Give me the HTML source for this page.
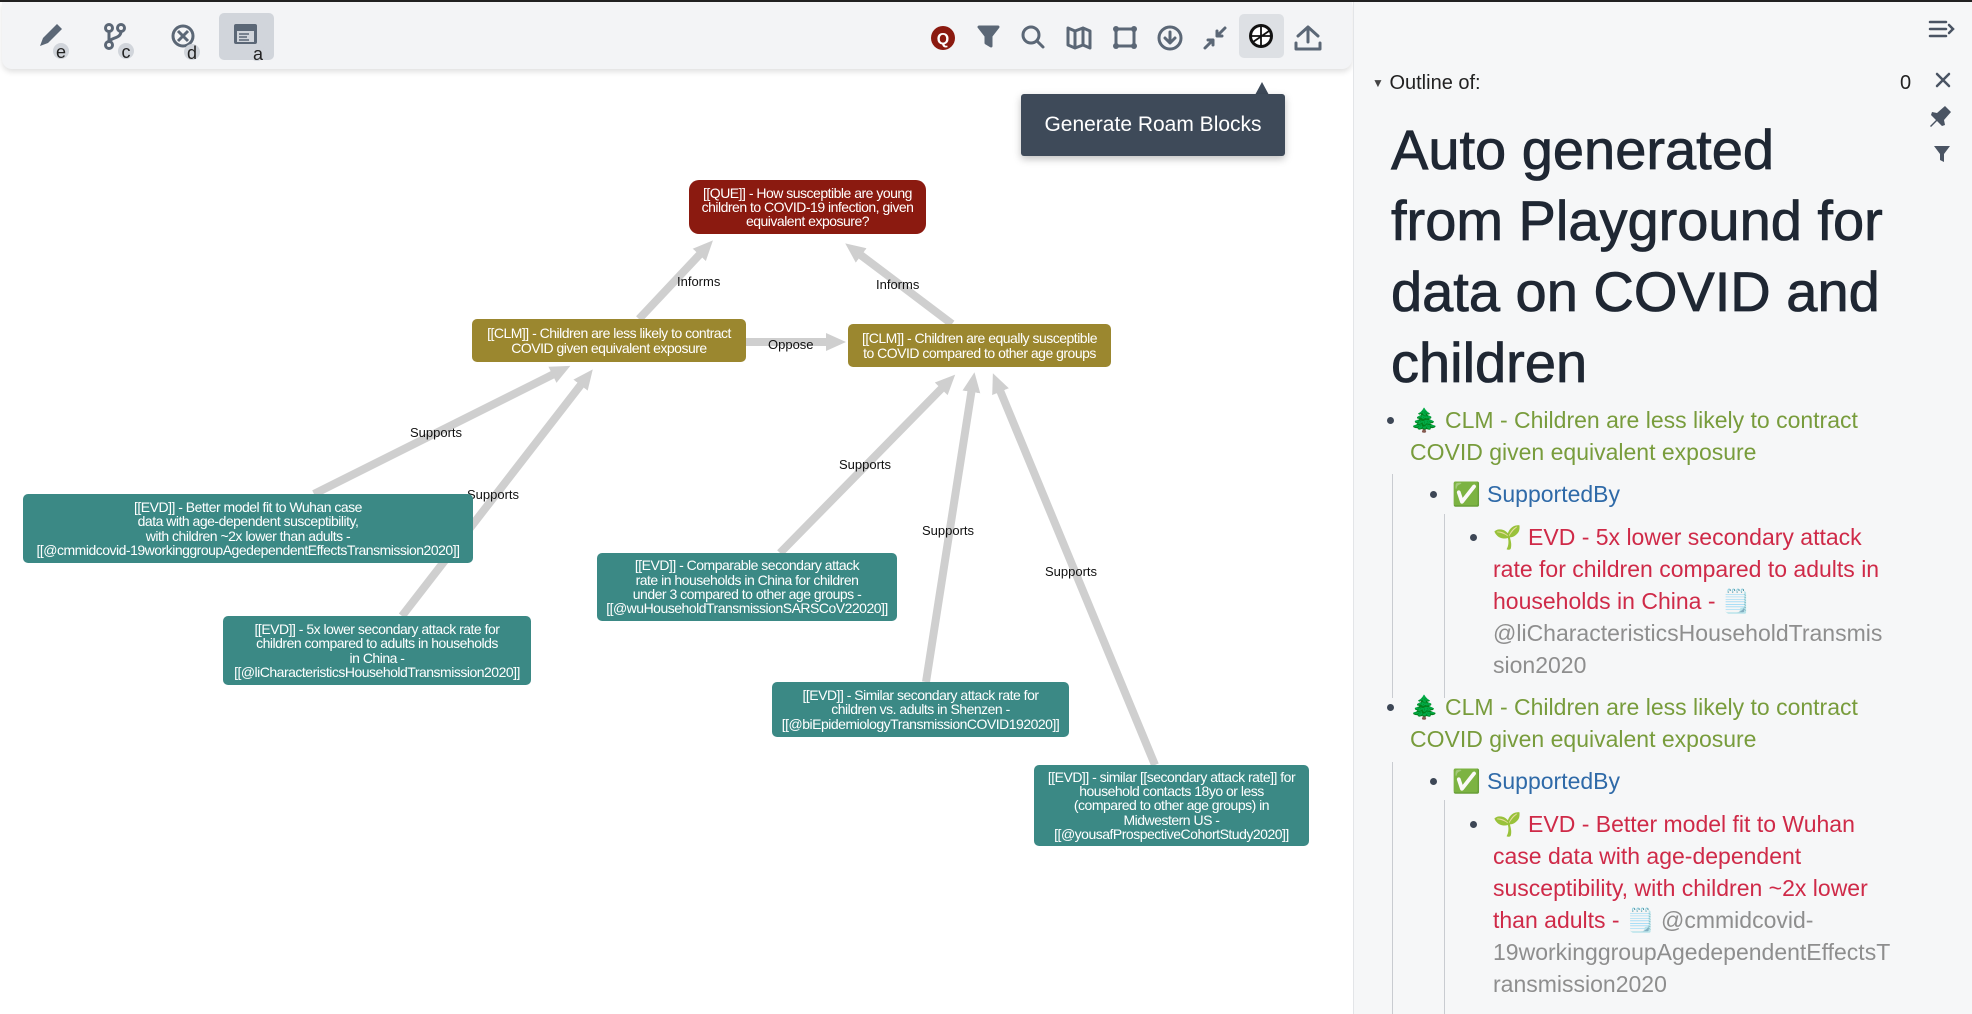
<!DOCTYPE html>
<html><head><meta charset="utf-8"><style>
*{box-sizing:border-box;margin:0;padding:0}
body{width:1972px;height:1014px;overflow:hidden;background:#fff;font-family:"Liberation Sans",sans-serif;position:relative}
.topline{position:absolute;left:0;top:0;width:1972px;height:2px;background:#222}
.toolbar{position:absolute;left:2px;top:2px;width:1350px;height:67px;background:#f3f4f6;border-radius:0 0 10px 10px;box-shadow:0 3px 6px rgba(0,0,0,.12)}
.panel{position:absolute;left:1353px;top:2px;width:619px;height:1012px;background:#f6f7f8;border-left:1px solid #e3e5e8}
.gl{position:absolute;font-size:13px;color:#111;font-family:"Liberation Sans",sans-serif}
.node{position:absolute;color:#fff;font-size:14px;line-height:14.3px;text-align:center;display:flex;align-items:center;justify-content:center;border-radius:5px;font-family:"Liberation Sans",sans-serif;letter-spacing:-0.5px;white-space:nowrap}
.evd{background:#3b8985}
.clm{background:#9b872f}
.o{position:absolute;font-size:23px;line-height:32px;overflow-wrap:anywhere}
.g{color:#789c3c}.r{color:#cf2a48}.b{color:#2f6aa8}.gr{color:#8e8e8e}
.dot{position:absolute;width:7px;height:7px;border-radius:50%;background:#3d4756}
.vl{position:absolute;width:1px;background:#c9ccd1}
</style></head><body>
<div class="topline"></div>
<div class="toolbar">
 <div style="position:absolute;left:217px;top:11px;width:55px;height:47px;background:#d1d5db;border-radius:5px"></div>
 <div style="position:absolute;left:1237px;top:12px;width:45px;height:44px;background:#dde0e4;border-radius:5px"></div>
</div>
<svg style="position:absolute;left:0;top:0" width="1352" height="70">
 <g fill="#5b6776" stroke="#5b6776">
  <path d="M40 46 l3-8 14-14 5 5-14 14z" stroke="none"/>
  <g fill="none" stroke-width="3"><circle cx="109" cy="28" r="3.5"/><circle cx="121" cy="28" r="3.5"/><circle cx="109" cy="45" r="3.5"/><path d="M109 31v11M121 31c0 8-10 6-12 11"/></g>
  <g fill="none" stroke-width="3"><circle cx="183" cy="36" r="10"/><path d="M178 31l10 10M188 31l-10 10"/></g>
  <rect x="234" y="24" width="23" height="20" rx="2" stroke="none"/>
  <rect x="237" y="31" width="17" height="11" fill="#d1d5db" stroke="none"/>
  <path d="M239 34h10M239 37h8M239 40h10" stroke-width="1.5"/>
 </g>
 <g fill="#d1d5db"><circle cx="61" cy="51" r="8"/><circle cx="126" cy="51" r="8"/><circle cx="192" cy="52" r="8"/><circle cx="257" cy="53" r="8"/></g>
 <g font-size="18" fill="#222" text-anchor="middle" font-family="Liberation Sans"><text x="61" y="58">e</text><text x="126" y="58">c</text><text x="192" y="59">d</text><text x="258" y="60">a</text></g>
 <circle cx="943" cy="38" r="12" fill="#8b1a10"/><text x="943" y="44" fill="#fff" font-size="16" font-weight="bold" text-anchor="middle" font-family="Liberation Sans">Q</text>
 <g fill="none" stroke="#5b6776" stroke-width="3" stroke-linecap="round" stroke-linejoin="round">
  <path d="M979 27h19l-7 9v10l-5-3v-7z" fill="#5b6776"/>
  <circle cx="1031" cy="35" r="8"/><path d="M1037 41l6 6"/>
  <path d="M1068 28l7 3 8-3 7 3v17l-7-3-8 3-7-3zM1075 31v17M1083 28v17"/>
  <rect x="1116" y="29" width="18" height="17"/>
  <circle cx="1170" cy="38" r="11"/><path d="M1170 32v10M1165 38l5 5 5-5"/>
  <path d="M1205 48l8-8M1208 40h5v5M1225 28l-8 8M1217 31v5h5"/>
  <path d="M1298 36l10-9 10 9M1308 28v14M1296 43v6h24v-6"/>
 </g>
 <g fill="#5b6776"><circle cx="1116" cy="29" r="3"/><circle cx="1134" cy="29" r="3"/><circle cx="1116" cy="46" r="3"/><circle cx="1134" cy="46" r="3"/></g>
 <circle cx="1261" cy="36" r="12" fill="#111"/><circle cx="1261" cy="36" r="9" fill="#fff"/>
 <path d="M1252 36h18M1261 27v18M1253 42l16-11" stroke="#111" stroke-width="1.8"/>
</svg>
<svg style="position:absolute;left:1254px;top:82px" width="16" height="14"><path d="M8 0l7 13H1z" fill="#3e4a59"/></svg>
<div style="position:absolute;left:1021px;top:94px;width:264px;height:62px;background:#3e4a59;border-radius:3px;color:#fff;font-size:21px;line-height:62px;text-align:center;box-shadow:0 3px 8px rgba(0,0,0,.25)">Generate Roam Blocks</div>

<svg style="position:absolute;left:0;top:0" width="1352" height="1014">
 <defs><marker id="a" markerUnits="userSpaceOnUse" markerWidth="22" markerHeight="22" refX="4" refY="11" orient="auto"><path d="M0 2L20 11 0 20z" fill="#cfcfcf"/></marker></defs>
 <g stroke="#cfcfcf" stroke-width="8" marker-end="url(#a)" fill="none">
  <line x1="639" y1="319" x2="702" y2="252"/>
  <line x1="952" y1="324" x2="858" y2="253"/>
  <line x1="746" y1="342" x2="830" y2="342"/>
  <line x1="314" y1="494" x2="556" y2="373"/>
  <line x1="402" y1="616" x2="583" y2="382"/>
  <line x1="780" y1="553" x2="944" y2="386"/>
  <line x1="926" y1="682" x2="972" y2="388"/>
  <line x1="1155" y1="765" x2="999" y2="388"/>
 </g>
</svg>
<div class="gl" style="left:677px;top:274px">Informs</div>
<div class="gl" style="left:876px;top:277px">Informs</div>
<div class="gl" style="left:768px;top:337px">Oppose</div>
<div class="gl" style="left:410px;top:425px">Supports</div>
<div class="gl" style="left:467px;top:487px">Supports</div>
<div class="gl" style="left:839px;top:457px">Supports</div>
<div class="gl" style="left:922px;top:523px">Supports</div>
<div class="gl" style="left:1045px;top:564px">Supports</div>

<div class="node" style="left:689px;top:180px;width:237px;height:54px;background:#8b1a10;border-radius:10px">[[QUE]] - How susceptible are young<br>children to COVID-19 infection, given<br>equivalent exposure?</div>
<div class="node clm" style="left:472px;top:319px;width:274px;height:43px">[[CLM]] - Children are less likely to contract<br>COVID given equivalent exposure</div>
<div class="node clm" style="left:848px;top:324px;width:263px;height:43px">[[CLM]] - Children are equally susceptible<br>to COVID compared to other age groups</div>
<div class="node evd" style="left:23px;top:494px;width:450px;height:69px">[[EVD]] - Better model fit to Wuhan case<br>data with age-dependent susceptibility,<br>with children ~2x lower than adults -<br>[[@cmmidcovid-19workinggroupAgedependentEffectsTransmission2020]]</div>
<div class="node evd" style="left:223px;top:616px;width:308px;height:69px">[[EVD]] - 5x lower secondary attack rate for<br>children compared to adults in households<br>in China -<br>[[@liCharacteristicsHouseholdTransmission2020]]</div>
<div class="node evd" style="left:597px;top:553px;width:300px;height:68px">[[EVD]] - Comparable secondary attack<br>rate in households in China for children<br>under 3 compared to other age groups -<br>[[@wuHouseholdTransmissionSARSCoV22020]]</div>
<div class="node evd" style="left:772px;top:682px;width:297px;height:55px">[[EVD]] - Similar secondary attack rate for<br>children vs. adults in Shenzen -<br>[[@biEpidemiologyTransmissionCOVID192020]]</div>
<div class="node evd" style="left:1034px;top:765px;width:275px;height:81px">[[EVD]] - similar [[secondary attack rate]] for<br>household contacts 18yo or less<br>(compared to other age groups) in<br>Midwestern US -<br>[[@yousafProspectiveCohortStudy2020]]</div>

<div class="panel"></div>
<svg style="position:absolute;left:1925px;top:18px" width="36" height="190">
 <g stroke="#4a5463" stroke-width="2.5" fill="none" stroke-linecap="round"><path d="M5 4h16M5 11h16M5 18h16M24 7l4 4-4 4"/><path d="M12 56l12 12M24 56l-12 12"/></g>
 <path d="M12 95l8-7 6 6-7 8 1 5-3 1-5-5-6 6-1-1 6-6-5-5 1-3z" fill="#4a5463"/>
 <path d="M9 128h16l-6 8v8l-4-2v-6z" fill="#4a5463"/>
</svg>
<div style="position:absolute;left:1372px;top:72px;font-size:20px;color:#222"><span style="font-size:12px;color:#444;position:relative;top:-2px">▼</span> Outline of:</div>
<div style="position:absolute;left:1900px;top:72px;font-size:20px;color:#222">0</div>
<div style="position:absolute;left:1391px;top:114px;white-space:nowrap;font-size:56px;line-height:71px;color:#1f2733;-webkit-text-stroke:0.8px #1f2733">Auto generated<br>from Playground for<br>data on COVID and<br>children</div>

<div class="dot" style="left:1387px;top:417px"></div>
<div class="o g" style="left:1410px;top:404px;width:480px">🌲 CLM - Children are less likely to contract<br>COVID given equivalent exposure</div>
<div class="vl" style="left:1392px;top:474px;height:224px"></div>
<div class="dot" style="left:1430px;top:491px"></div>
<div class="o b" style="left:1452px;top:478px">✅ SupportedBy</div>
<div class="vl" style="left:1444px;top:514px;height:184px"></div>
<div class="dot" style="left:1470px;top:534px"></div>
<div class="o r" style="left:1493px;top:521px;width:398px">🌱 EVD - 5x lower secondary attack rate for children compared to adults in households in China - 🗒️ <span class="gr">@liCharacteristicsHouseholdTransmission2020</span></div>

<div class="dot" style="left:1387px;top:704px"></div>
<div class="o g" style="left:1410px;top:691px;width:480px">🌲 CLM - Children are less likely to contract<br>COVID given equivalent exposure</div>
<div class="vl" style="left:1392px;top:762px;height:252px"></div>
<div class="dot" style="left:1430px;top:778px"></div>
<div class="o b" style="left:1452px;top:765px">✅ SupportedBy</div>
<div class="vl" style="left:1444px;top:800px;height:214px"></div>
<div class="dot" style="left:1470px;top:821px"></div>
<div class="o r" style="left:1493px;top:808px;width:398px">🌱 EVD - Better model fit to Wuhan case data with age-dependent susceptibility, with children ~2x lower than adults - 🗒️ <span class="gr">@cmmidcovid-19workinggroupAgedependentEffectsTransmission2020</span></div>
</body></html>
